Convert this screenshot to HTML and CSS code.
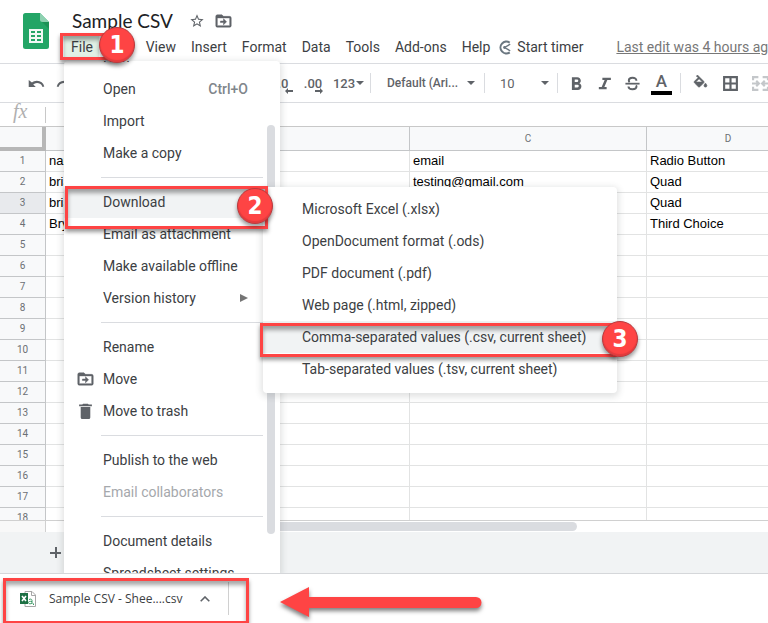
FILE: index.html
```html
<!DOCTYPE html>
<html lang="en">
<head>
<meta charset="utf-8">
<title>Sample CSV</title>
<link rel="stylesheet" href="styles.css">
</head>
<body>
<main class="app">
  <header class="header">
    <svg class="logo" viewBox="0 0 26 36" aria-hidden="true">
      <path fill="#23a566" d="M2.500 0H17l9 9v24.500a2.500 2.500 0 0 1-2.500 2.500h-21A2.500 2.500 0 0 1 0 33.500v-31A2.500 2.500 0 0 1 2.500 0z"/>
      <path fill="#8ed1b1" d="M17 0l9 9h-6.500A2.500 2.500 0 0 1 17 6.500z"/>
      <path fill="#1c9256" d="M19 9h7v7z"/>
      <path fill="#f1f9f5" fill-rule="evenodd" d="M6 16h14v14H6zM8 18v2h4v-2zM14 18v2h4v-2zM8 22v2h4v-2zM14 22v2h4v-2zM8 26v2h4v-2zM14 26v2h4v-2z"/>
    </svg>
    <div class="heading">
      <div class="title-row">
        <h1 class="title">Sample CSV</h1>
        <button class="icon-btn" aria-label="Star"><svg class="icon" viewBox="0 0 24 24"><path d="M22 9.240l-7.190-.62L12 2 9.190 8.630 2 9.240l5.460 4.730L5.820 21 12 17.270 18.180 21l-1.630-7.030zM12 15.400l-3.760 2.270 1-4.280-3.320-2.880 4.380-.38L12 6.100l1.710 4.040 4.380.38-3.320 2.880 1 4.280z"/></svg></button>
        <button class="icon-btn" aria-label="Move"><svg class="icon icon-wide" viewBox="1 3 22 18"><path d="M20 6h-8l-2-2H4a2 2 0 0 0-2 2v12a2 2 0 0 0 2 2h16a2 2 0 0 0 2-2V8a2 2 0 0 0-2-2zm0 12H4V8h16zm-8-1l4-4-4-4v3H8v2h4z" stroke="#5f6368" stroke-width=".6"/></svg></button>
      </div>
      <nav class="menubar">
        <button class="menu-btn menu-open">File</button>
        <button class="menu-btn">Edit</button>
        <button class="menu-btn">View</button>
        <button class="menu-btn">Insert</button>
        <button class="menu-btn">Format</button>
        <button class="menu-btn">Data</button>
        <button class="menu-btn">Tools</button>
        <button class="menu-btn">Add-ons</button>
        <button class="menu-btn">Help</button>
        <button class="timer"><svg class="icon icon-timer" viewBox="0 0 16 16"><path d="M12.500 2.800A6.300 6.300 0 1 0 12.500 13.200" fill="none" stroke="#6b7780" stroke-width="2.200"/><path d="M7 8l6-3.500M7 8l6 3.500" stroke="#6b7780" stroke-width="1.500"/><circle cx="7" cy="8" r="1.500" fill="#6b7780"/></svg>Start timer</button>
        <a class="last-edit" href="#">Last edit was 4 hours ago</a>
      </nav>
    </div>
  </header>

  <div class="toolbar">
    <div class="history">
      <button class="tool" aria-label="Undo"><svg class="icon icon-tool" viewBox="0 0 24 24"><path d="M12.500 8c-2.650 0-5.050.99-6.900 2.600L1 7v10h10l-3.620-3.620A8 8 0 0 1 20.500 17l2.500-.9A11 11 0 0 0 12.500 8z"/></svg></button>
      <button class="tool" aria-label="Redo"><svg class="icon icon-tool" viewBox="0 0 24 24"><path d="M11.500 8c2.650 0 5.050.99 6.900 2.600L23 7v10H13l3.620-3.620A8 8 0 0 0 3.500 17L1 16.100A11 11 0 0 1 11.500 8z"/></svg></button>
    </div>
    <div class="decimals">
      <button class="tool decimal" aria-label="Decrease decimal places">.0<svg class="arrow" viewBox="0 0 8 6"><path d="M0 3l3-3v2h5v2H3v2z"/></svg></button>
      <button class="tool decimal" aria-label="Increase decimal places">.00<svg class="arrow" viewBox="0 0 8 6"><path d="M8 3L5 0v2H0v2h5v2z"/></svg></button>
    </div>
    <button class="tool number-format">123<span class="caret"></span></button>
    <span class="sep"></span>
    <label class="picker picker-font"><select aria-label="Font"><option>Default (Ari...</option></select><span class="caret"></span></label>
    <span class="sep"></span>
    <label class="picker picker-size"><select aria-label="Font size"><option>10</option></select><span class="caret"></span></label>
    <span class="sep"></span>
    <button class="tool" aria-label="Bold"><svg class="icon icon-tool" viewBox="0 0 24 24"><path d="M16 11.800c1.300-.9 2.100-2.200 2.100-3.700C18.100 5.200 16 3 13 3H5.500v18h8.400c2.900 0 5-2.200 5-4.900 0-2-1.200-3.500-2.900-4.300zM9.500 6.200h3.200a1.800 1.800 0 0 1 0 3.700H9.500zM13.200 17.700H9.500v-4.100h3.700a2 2 0 0 1 0 4.100z"/></svg></button>
    <button class="tool" aria-label="Italic"><svg class="icon icon-tool" viewBox="0 0 24 24"><path d="M9 4v3h3.200L8 17H4v3h11v-3h-3.200L16 7h5V4z"/></svg></button>
    <button class="tool" aria-label="Strikethrough"><svg class="icon icon-tool" viewBox="0 0 24 24"><path d="M2 11h20v2.500H2z"/><path d="M17.500 8c0-2.600-2.300-4-5.400-4-3 0-5.300 1.500-5.300 3.800 0 1 .4 1.800 1.100 2.400M6.300 16.200c.2 2.500 2.500 4 5.700 4s5.600-1.500 5.600-3.800c0-.8-.2-1.400-.6-1.900" fill="none" stroke="#5f6368" stroke-width="2.800"/></svg></button>
    <button class="tool text-color" aria-label="Text color">A</button>
    <span class="sep"></span>
    <button class="tool fill" aria-label="Fill color"><svg class="icon icon-tool" viewBox="0 0 24 24"><path d="M16.560 8.940L7.620 0 6.210 1.410l2.380 2.380-5.150 5.150a1.500 1.500 0 0 0 0 2.120l5.500 5.500a1.500 1.500 0 0 0 2.120 0l5.500-5.500a1.500 1.500 0 0 0 0-2.120zM5.210 10L10 5.210 14.790 10zM19 11.500s-2 2.170-2 3.500a2 2 0 0 0 4 0c0-1.330-2-3.500-2-3.500z" stroke="#5f6368"/></svg></button>
    <button class="tool" aria-label="Borders"><svg class="icon icon-tool" viewBox="0 0 16 16"><path fill-rule="evenodd" d="M1 1h14v14H1zM3 3v4h4V3zM9 3v4h4V3zM3 9v4h4V9zM9 9v4h4V9z"/></svg></button>
    <button class="tool merge" aria-label="Merge cells"><svg class="icon icon-tool" viewBox="0 0 16 16"><path fill="none" stroke="#c4c7ca" stroke-width="2" d="M1 5V2h5M10 2h5v3M1 11v3h5M10 14h5v-3M0 8h6M16 8h-6M4 5.500L6.500 8 4 10.500M12 5.500L9.500 8l2.500 2.500"/></svg></button>
  </div>

  <div class="formula"><label class="fx" for="formula">fx</label><input id="formula" class="formula-input"></div>

  <div class="grid-view">
    <table class="grid">
      <colgroup><col class="col-num"><col class="col-a"><col class="col-b"><col class="col-c"><col class="col-d"></colgroup>
      <thead><tr><th class="corner"></th><th>A</th><th>B</th><th>C</th><th>D</th></tr></thead>
      <tbody>
        <tr><th>1</th><td>name</td><td></td><td>email</td><td>Radio Button</td></tr>
        <tr><th>2</th><td>brian</td><td></td><td>testing@gmail.com</td><td>Quad</td></tr>
        <tr><th class="current">3</th><td>brian</td><td></td><td></td><td>Quad</td></tr>
        <tr><th>4</th><td>Bryan</td><td></td><td></td><td>Third Choice</td></tr>
        <tr><th>5</th><td></td><td></td><td></td><td></td></tr>
        <tr><th>6</th><td></td><td></td><td></td><td></td></tr>
        <tr><th>7</th><td></td><td></td><td></td><td></td></tr>
        <tr><th>8</th><td></td><td></td><td></td><td></td></tr>
        <tr><th>9</th><td></td><td></td><td></td><td></td></tr>
        <tr><th>10</th><td></td><td></td><td></td><td></td></tr>
        <tr><th>11</th><td></td><td></td><td></td><td></td></tr>
        <tr><th>12</th><td></td><td></td><td></td><td></td></tr>
        <tr><th>13</th><td></td><td></td><td></td><td></td></tr>
        <tr><th>14</th><td></td><td></td><td></td><td></td></tr>
        <tr><th>15</th><td></td><td></td><td></td><td></td></tr>
        <tr><th>16</th><td></td><td></td><td></td><td></td></tr>
        <tr><th>17</th><td></td><td></td><td></td><td></td></tr>
        <tr><th>18</th><td></td><td></td><td></td><td></td></tr>
      </tbody>
    </table>
  </div>
  <div class="hscroll"><span class="hscroll-head"></span><span class="hscroll-thumb"></span></div>
  <footer class="sheet-bar"><button class="add-sheet" aria-label="Add sheet"><svg class="icon-add" viewBox="0 0 11 11"><path d="M5 0h2v5h4v2H7v4H5V7H0V5h5z"/></svg></button></footer>

  <div class="menu">
    <div class="menu-list">
      <button class="item">New</button>
      <button class="item">Open<span class="shortcut">Ctrl+O</span></button>
      <button class="item">Import</button>
      <button class="item">Make a copy</button>
      <hr class="divider">
      <button class="item active">Download</button>
      <button class="item">Email as attachment</button>
      <button class="item">Make available offline</button>
      <button class="item">Version history<span class="more"></span></button>
      <hr class="divider">
      <button class="item">Rename</button>
      <button class="item"><svg class="item-icon" viewBox="1 3 22 18"><path d="M20 6h-8l-2-2H4a2 2 0 0 0-2 2v12a2 2 0 0 0 2 2h16a2 2 0 0 0 2-2V8a2 2 0 0 0-2-2zm0 12H4V8h16zm-8-1l4-4-4-4v3H8v2h4z" stroke="#5f6368" stroke-width=".6"/></svg>Move</button>
      <button class="item"><svg class="item-icon" viewBox="2 2 20 20"><path d="M6 20a2 2 0 0 0 2 2h8a2 2 0 0 0 2-2V7H6zM20 4h-4l-1-1H9L8 4H4v2h16z"/></svg>Move to trash</button>
      <hr class="divider">
      <button class="item">Publish to the web</button>
      <button class="item" disabled>Email collaborators</button>
      <hr class="divider">
      <button class="item">Document details</button>
      <button class="item">Spreadsheet settings</button>
    </div>
    <span class="menu-thumb"></span>
  </div>

  <div class="submenu">
    <button class="item">Microsoft Excel (.xlsx)</button>
    <button class="item">OpenDocument format (.ods)</button>
    <button class="item">PDF document (.pdf)</button>
    <button class="item">Web page (.html, zipped)</button>
    <button class="item active">Comma-separated values (.csv, current sheet)</button>
    <button class="item">Tab-separated values (.tsv, current sheet)</button>
  </div>

  <div class="mark mark-file"></div><span class="badge badge-1">1</span>
  <div class="mark mark-download"></div><span class="badge badge-2">2</span>
  <div class="mark mark-csv"></div><span class="badge badge-3">3</span>
</main>

<section class="downloads">
  <button class="download">
    <svg class="file-icon" viewBox="0 0 16 16"><path d="M5 .5h7L15.500 4v11.500H5z" fill="#fff" stroke="#a6a6a6"/><path d="M11.500.5V4.500h4" fill="none" stroke="#a6a6a6"/><path d="M9 8.500c2-1 3 0 3 1v3.500M12 10.500c-3-.5-4 .5-3.500 1.500.5 1.200 2.500 1 3.500 0M13.500 12.500v1.500" fill="none" stroke="#3d9a66"/><path d="M0 2h8v11H0z" fill="#1d7044"/><path d="M2 5l4 5M6 5l-4 5" stroke="#fff" stroke-width="1.600"/></svg>
    <span>Sample CSV - Shee....csv</span>
  </button>
  <button class="expand" aria-label="More options"><svg class="chevron" viewBox="0 0 10 6"><path d="M.7 5.300L5 1l4.300 4.300" fill="none" stroke="#5f6368" stroke-width="1.600"/></svg></button>
  <div class="mark mark-file-saved"></div>
  <svg class="pointer" viewBox="0 0 210 40"><path d="M4 19L33 4v10h167a5 5 0 0 1 0 11H33v9z"/></svg>
</section>
</body>
</html>
```

FILE: styles.css
```css
* { box-sizing: border-box; }

body {
  margin: 0;
  height: 100vh;
  display: flex;
  flex-direction: column;
  overflow: hidden;
  background: #fff;
  color: #3c4043;
  font-family: Roboto, sans-serif;
  font-size: 14px;
}

button, select, input {
  margin: 0;
  padding: 0;
  border: 0;
  background: none;
  color: inherit;
  font: inherit;
}

.app {
  position: relative;
  flex: 1;
  min-height: 0;
  display: flex;
  flex-direction: column;
  overflow: hidden;
}

/* Header */
.header {
  display: flex;
  height: 64px;
  flex: none;
  border-bottom: 1px solid #dadce0;
}
.logo { width: 26px; height: 36px; margin: 13px 15px 0 23px; flex: none; }
.heading { flex: 1; min-width: 0; }
.title-row { display: flex; align-items: center; height: 36px; padding: 6px 0 0 8px; }
.title { margin: 0 16px 0 0; font: 400 19px/24px Lato, sans-serif; color: #202124; }
.icon-btn { display: flex; margin-right: 10px; }
.icon { width: 16px; height: 16px; flex: none; fill: #5f6368; }
.icon-wide { width: 17px; height: 14px; }
.menubar { display: flex; align-items: center; gap: 1px; height: 22px; white-space: nowrap; }
.menu-btn { flex: none; height: 22px; padding: 0 7px; }
.menu-open { padding-right: 6px; background: #e1f1e5; }
.timer { display: flex; align-items: center; gap: 4px; flex: none; }
.icon-timer { width: 15px; height: 15px; }
.last-edit { margin-left: 32px; color: #777; }

/* Toolbar */
.toolbar {
  display: flex;
  align-items: center;
  flex: none;
  height: 39px;
  border-bottom: 1px solid #dadce0;
  color: #5f6368;
  font-size: 13px;
  overflow: hidden;
}
.history { display: flex; width: 269px; padding-left: 22px; flex: none; }
.tool { display: flex; align-items: center; justify-content: center; flex: none; width: 28px; height: 28px; }
.icon-tool { width: 17px; height: 17px; }
.decimals { display: flex; gap: 2px; flex: none; }
.decimal { position: relative; font-weight: 500; }
.arrow { position: absolute; right: 4px; bottom: 3px; width: 8px; height: 6px; fill: #5f6368; }
.number-format { width: 43px; gap: 1px; font-weight: 500; }
.caret { flex: none; border: 4px solid transparent; border-top-color: #5f6368; border-bottom-width: 0; }
.sep { flex: none; width: 1px; height: 20px; background: #dadce0; }
.picker { display: flex; align-items: center; flex: none; }
.picker select { flex: 1; min-width: 0; appearance: none; }
.picker-font { width: 113px; padding: 0 9px 0 16px; font-weight: 500; font-size: 12px; }
.picker-size { width: 72px; padding: 0 8px 0 15px; }
.picker-size + .sep { margin-right: 4px; }
.text-color { height: 24px; width: 21px; margin: 0 8px 0 5px; border-bottom: 4px solid #000; font-size: 17px; font-weight: 500; }
.fill { margin: 0 2px 0 5px; }
.merge { margin-left: 2px; }

/* Formula bar */
.formula { display: flex; align-items: center; flex: none; height: 24px; border-bottom: 1px solid #c8c8c8; }
.fx { width: 45px; padding-left: 13px; color: #b0b0b0; font: italic 20px/16px "Liberation Serif", serif; align-self: flex-start; }
.formula-input { flex: 1; height: 16px; border-left: 1px solid #c8c8c8; padding-left: 4px; }

/* Spreadsheet grid */
.grid-view { flex: 1; min-height: 0; overflow: hidden; border-bottom: 1px solid #d0d0d0; }
.grid { table-layout: fixed; width: max(100%, 810px); border-collapse: separate; border-spacing: 0; }
.col-num { width: 46px; }
.col-a { width: 80px; }
.col-b { width: 284px; }
.col-c { width: 237px; }
.col-d { width: 163px; }
.grid th, .grid td { height: 21px; padding: 0 3px; border: 0 solid #e2e3e3; border-width: 0 1px 1px 0; line-height: 20px; overflow: hidden; white-space: nowrap; }
.grid td { color: #000; font-family: "Liberation Sans", sans-serif; font-size: 13px; }
.grid th { background: #f8f9fa; border-color: #c4c6c8; color: #6c7074; font-size: 10px; font-weight: 400; }
.grid thead th { height: 24px; line-height: 23px; }
.grid .corner { border: 4px solid #b7b7b7; border-width: 0 4px 4px 0; }
.grid .current { background: #e8eaed; }

.hscroll { display: flex; align-items: center; flex: none; height: 11px; }
.hscroll-head { width: 46px; height: 11px; background: #f8f8f8; border-right: 1px solid #d0d0d0; }
.hscroll-thumb { width: 500px; height: 9px; margin-left: 31px; border-radius: 5px; background: #dadce0; }
.sheet-bar { display: flex; align-items: center; flex: none; height: 41px; padding-left: 50px; background: #f1f3f4; }
.add-sheet { display: flex; }
.icon-add { width: 11px; height: 11px; fill: #5f6368; }

/* File menu and its submenu */
.menu, .submenu { position: absolute; background: #fff; box-shadow: 0 2px 6px 2px rgba(60, 64, 67, .15); }
.menu { top: 61px; bottom: 0; left: 64px; width: 216px; overflow: hidden; border-radius: 4px 4px 0 0; }
.menu-list { display: flex; flex-direction: column; margin-top: -20px; }
.item { position: relative; display: flex; align-items: center; flex: none; height: 32px; padding: 0 32px 0 39px; text-align: left; white-space: nowrap; }
.item:disabled { color: #a5a8ac; }
.item.active { background: #f1f3f4; }
.menu .item.active { margin-right: 13px; }
.item-icon { position: absolute; left: 13px; width: 17px; height: 16px; fill: #5f6368; }
.shortcut { margin-left: auto; color: #80868b; font-weight: 500; }
.more { margin-left: auto; border: 4px solid transparent; border-left: 8px solid #757575; border-right-width: 0; }
.divider { flex: none; height: 1px; margin: 8px 17px 8px 37px; border: 0; background: #dadce0; }
.menu-thumb { position: absolute; top: 64px; right: 5px; bottom: 39px; width: 8px; border-radius: 4px; background: #dadce0; }
.submenu { top: 187px; left: 263px; width: 354px; padding: 6px 0 8px; display: flex; flex-direction: column; border-radius: 4px; }

/* Tutorial annotations */
.mark { position: absolute; border: 3px solid #fe4444; box-shadow: 0 3px 4px rgba(0, 0, 0, .4), inset 0 4px 4px rgba(0, 0, 0, .35); }
.mark-file { left: 60px; top: 33px; width: 60px; height: 27px; }
.mark-download { left: 65px; top: 186px; width: 203px; height: 43px; }
.mark-csv { left: 260px; top: 323px; width: 357px; height: 34px; }
.mark-file-saved { left: 3px; top: 4px; width: 246px; height: 46px; }
.badge {
  position: absolute;
  width: 36px;
  height: 36px;
  border: 1px solid #b93a3e;
  border-radius: 50%;
  background: #fe4444;
  box-shadow: 0 3px 4px rgba(0, 0, 0, .4), inset 0 -2px 1px #e23b3d;
  color: #fff;
  font: 700 24px/34px "DejaVu Sans Condensed", "DejaVu Sans", sans-serif;
  text-align: center;
}
.badge-1 { left: 99px; top: 27px; }
.badge-2 { left: 237px; top: 188px; }
.badge-3 { left: 602px; top: 321px; }

/* Browser download shelf */
.downloads { position: relative; display: flex; align-items: center; flex: none; height: 50px; border-top: 1px solid #d5d7da; background: #fff; font: 12px "Open Sans", sans-serif; }
.download { display: flex; align-items: center; gap: 13px; padding-left: 20px; }
.file-icon { width: 16px; height: 16px; }
.expand { display: flex; align-items: center; justify-content: center; width: 47px; height: 33px; border-right: 1px solid #d0d0d0; }
.chevron { width: 10px; height: 6px; }
.pointer { position: absolute; left: 276px; top: 9px; width: 210px; height: 40px; fill: #fe4444; filter: drop-shadow(0 3px 2px rgba(0, 0, 0, .5)); }
```
